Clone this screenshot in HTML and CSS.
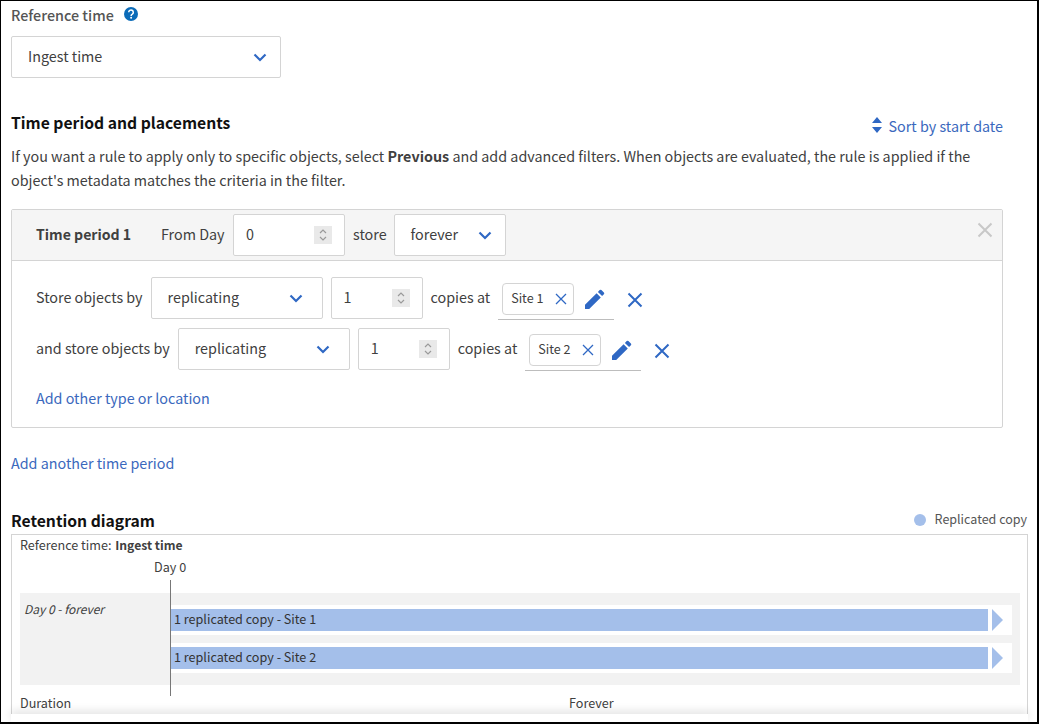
FILE: index.html
```html
<!DOCTYPE html>
<html lang="en">
<head>
<meta charset="utf-8">
<title>Time period and placements</title>
<link rel="stylesheet" href="styles.css">
</head>
<body>
<main class="frame">
  <div class="label-row">
    <span class="field-label">Reference time</span>
    <svg class="help" viewBox="0 0 14 14" width="14" height="14"><circle cx="7" cy="7" r="7" fill="#0b6bb8"/><path d="M4.700 5.300a2.300 2.300 0 1 1 3.600 1.900c-.8.5-1.200.9-1.200 1.700" fill="none" stroke="#fff" stroke-width="1.500"/><circle cx="7.100" cy="10.800" r="1" fill="#fff"/></svg>
  </div>
  <div class="select select-ref"><span>Ingest time</span><svg class="chev" viewBox="0 0 14 9" width="14" height="9"><path d="M1.500 1.500 7 7l5.500-5.500" fill="none" stroke="#2f68c4" stroke-width="2.200"/></svg></div>

  <div class="section-head">
    <h2 class="title">Time period and placements</h2>
    <a class="link sort"><svg class="sort-icon" viewBox="0 0 10 16" width="10" height="16"><path d="M5 0l5 6H0zM5 16l5-6H0z" fill="#2f68c4"/></svg>Sort by start date</a>
  </div>
  <p class="intro">If you want a rule to apply only to specific objects, select <b>Previous</b> and add advanced filters. When objects are evaluated, the rule is applied if the object's metadata matches the criteria in the filter.</p>

  <section class="period">
    <header class="period-head">
      <strong class="period-name">Time period 1</strong>
      <span class="from">From Day</span>
      <div class="num num-day"><span>0</span><i class="spin"><svg viewBox="0 0 8 14" width="8" height="14"><path d="M1 5l3-3 3 3M1 9l3 3 3-3" fill="none" stroke="#9a9a9a" stroke-width="1.200"/></svg></i></div>
      <span class="head-word">store</span>
      <div class="select select-store"><span>forever</span><svg class="chev" viewBox="0 0 14 9" width="14" height="9"><path d="M1.500 1.500 7 7l5.500-5.500" fill="none" stroke="#2f68c4" stroke-width="2.200"/></svg></div>
      <svg class="close-period" viewBox="0 0 16 16" width="16" height="16"><path d="M1.500 1.500l13 13M14.500 1.500l-13 13" stroke="#c8c8c8" stroke-width="2" fill="none"/></svg>
    </header>
    <div class="period-body">
      <div class="rule">
        <span class="rule-word">Store objects by</span>
        <div class="select select-type"><span>replicating</span><svg class="chev" viewBox="0 0 14 9" width="14" height="9"><path d="M1.500 1.500 7 7l5.500-5.500" fill="none" stroke="#2f68c4" stroke-width="2.200"/></svg></div>
        <div class="num num-copies"><span>1</span><i class="spin"><svg viewBox="0 0 8 14" width="8" height="14"><path d="M1 5l3-3 3 3M1 9l3 3 3-3" fill="none" stroke="#9a9a9a" stroke-width="1.200"/></svg></i></div>
        <span class="rule-word">copies at</span>
        <div class="sites">
          <div class="chip"><span>Site 1</span><svg viewBox="0 0 12 12" width="12" height="12"><path d="M1 1l10 10M11 1 1 11" stroke="#2f68c4" stroke-width="1.300" fill="none"/></svg></div>
          <svg class="pencil" viewBox="0 0 20 20" width="20" height="20"><path d="M0 20v-4.200L11.600 4.200l4.200 4.200L4.200 20zM12.900 2.900 14.700 1.100a1.200 1.200 0 0 1 1.700 0l2.500 2.500a1.200 1.200 0 0 1 0 1.700l-1.800 1.800z" fill="#2f68c4"/></svg>
        </div>
        <svg class="remove" viewBox="0 0 16 16" width="16" height="16"><path d="M1.500 1.500l13 13M14.500 1.500l-13 13" stroke="#2f68c4" stroke-width="2" fill="none"/></svg>
      </div>
      <div class="rule">
        <span class="rule-word">and store objects by</span>
        <div class="select select-type"><span>replicating</span><svg class="chev" viewBox="0 0 14 9" width="14" height="9"><path d="M1.500 1.500 7 7l5.500-5.500" fill="none" stroke="#2f68c4" stroke-width="2.200"/></svg></div>
        <div class="num num-copies"><span>1</span><i class="spin"><svg viewBox="0 0 8 14" width="8" height="14"><path d="M1 5l3-3 3 3M1 9l3 3 3-3" fill="none" stroke="#9a9a9a" stroke-width="1.200"/></svg></i></div>
        <span class="rule-word">copies at</span>
        <div class="sites">
          <div class="chip"><span>Site 2</span><svg viewBox="0 0 12 12" width="12" height="12"><path d="M1 1l10 10M11 1 1 11" stroke="#2f68c4" stroke-width="1.300" fill="none"/></svg></div>
          <svg class="pencil" viewBox="0 0 20 20" width="20" height="20"><path d="M0 20v-4.200L11.600 4.200l4.200 4.200L4.200 20zM12.900 2.900 14.700 1.100a1.200 1.200 0 0 1 1.700 0l2.500 2.500a1.200 1.200 0 0 1 0 1.700l-1.800 1.800z" fill="#2f68c4"/></svg>
        </div>
        <svg class="remove" viewBox="0 0 16 16" width="16" height="16"><path d="M1.500 1.500l13 13M14.500 1.500l-13 13" stroke="#2f68c4" stroke-width="2" fill="none"/></svg>
      </div>
      <a class="link add-other">Add other type or location</a>
    </div>
  </section>
  <a class="link add-period">Add another time period</a>

  <div class="retention-head">
    <h2 class="title">Retention diagram</h2>
    <div class="legend"><i class="dot"></i><span>Replicated copy</span></div>
  </div>
  <section class="diagram">
    <div class="ref">Reference time: <b>Ingest time</b></div>
    <div class="day0">Day 0</div>
    <div class="band">
      <div class="band-label">Day 0 - forever</div>
      <div class="lanes">
        <div class="lane"><div class="bar">1 replicated copy - Site 1</div><i class="arrow"></i></div>
        <div class="lane"><div class="bar">1 replicated copy - Site 2</div><i class="arrow"></i></div>
      </div>
    </div>
    <div class="duration"><span class="dur-label">Duration</span><span>Forever</span></div>
    <i class="axis"></i>
  </section>
  <div class="fade"></div>
</main>
</body>
</html>
```
FILE: styles.css
```css
* { box-sizing: border-box; }
html, body { margin: 0; padding: 0; }
body { width: 1039px; height: 724px; overflow: hidden; background: #fff; }
.frame {
  position: relative;
  width: 1039px;
  height: 724px;
  overflow: hidden;
  border: solid #000;
  border-width: 1px 2px 2px 1px;
  padding: 0 0 0 10px;
  font: 14.33px/24px "Noto Sans CJK SC", "Source Sans Pro", "Noto Sans", sans-serif;
  color: #404040;
}
b, strong { font-weight: 700; }
.label-row { display: flex; align-items: center; gap: 10px; height: 27px; padding-top: 1px; }
.field-label { font-weight: 500; color: #555; }
.help { margin-bottom: 2px; }
.select, .num {
  display: flex;
  align-items: center;
  justify-content: space-between;
  height: 42px;
  border: 1px solid #d4d4d4;
  border-radius: 2px;
  background: #fff;
  flex: none;
}
.select > span, .num > span, .head-word, .from, .period-name, .rule-word, .chip > span { margin-bottom: 2px; }
.select { padding: 0 13px 0 16px; }
.select-ref { width: 270px; margin-top: 8px; }
.select-store { width: 112px; margin-left: -1px; }
.select-type { width: 172px; padding-right: 19px; }
.num { padding: 0 12px; }
.num-day { width: 112px; }
.num-copies { width: 92px; }
.spin { display: flex; align-items: center; justify-content: center; width: 18px; height: 18px; background: #e9e9e9; }
.section-head { display: flex; justify-content: space-between; align-items: flex-start; width: 992px; margin-top: 33px; height: 25px; }
.title { margin: 0; font-size: 15.7px; line-height: 24px; font-weight: 700; color: #111; }
.link { color: #3a68bd; }
.sort { display: flex; align-items: center; gap: 7px; margin-top: 3px; }
.sort-icon { margin-bottom: 2px; }
.intro { margin: 8px 0 0; width: 985px; }
.period { width: 992px; height: 219px; margin-top: 17px; border: 1px solid #d4d4d4; border-radius: 2px; }
.period-head { display: flex; align-items: center; gap: 8px; height: 51px; padding: 0 9px 0 24px; background: #f5f5f5; border-bottom: 1px solid #d4d4d4; }
.period-name { width: 117px; font-size: 14.1px; font-weight: 700; white-space: nowrap; }
.from { width: 64px; white-space: nowrap; }
.close-period { margin-left: auto; margin-top: -10px; }
.period-body { padding: 16px 24px 0; }
.rule { display: flex; align-items: center; gap: 8px; height: 42px; margin-bottom: 9px; white-space: nowrap; }
.sites { display: flex; align-items: center; gap: 11px; width: 116px; height: 43px; padding: 2px 0 0 4px; border-bottom: 1px solid #bdbdbd; align-self: flex-start; }
.chip { display: flex; align-items: center; justify-content: space-between; width: 72px; height: 32px; padding: 0 6px 0 8px; border: 1px solid #d4d4d4; border-radius: 4px; font-size: 12.6px; }
.remove { margin: 3px 0 0 5px; }
.add-other { display: block; margin-top: 16px; }
.add-period { display: block; margin-top: 23px; }
.retention-head { display: flex; justify-content: space-between; align-items: flex-start; width: 1016px; margin-top: 34px; height: 26px; }
.legend { display: flex; align-items: center; gap: 9px; font-size: 12.5px; margin-top: -2px; color: #555; }
.dot { width: 12px; height: 12px; border-radius: 50%; background: #a4bfea; margin-top: 1px; }
.diagram { position: relative; width: 1017px; height: 190px; margin-top: -1px; border: 1px solid #d4d4d4; padding: 0 8px; font-size: 12.6px; line-height: 20px; }
.ref { height: 20px; }
.ref b { font-size: 12.2px; margin-left: 1px; }
.day0 { margin: 2px 0 0 134px; height: 20px; }
.band { display: flex; width: 1000px; height: 92px; margin-top: 16px; padding: 12px 8px 0 4px; background: #f2f2f2; }
.band-label { width: 147px; font-style: italic; margin-top: -6px; font-size: 12px; }
.lanes { display: flex; flex-direction: column; gap: 8px; }
.lane { display: flex; align-items: center; width: 841px; height: 30px; background: #fff; }
.bar { width: 817px; height: 22px; padding-left: 3px; background: #a4bfea; line-height: 20px; color: #333; }
.arrow { width: 0; height: 0; margin-left: 4px; border-left: 11px solid #a4bfea; border-top: 11px solid transparent; border-bottom: 11px solid transparent; }
.duration { display: flex; margin-top: 8px; }
.dur-label { width: 549px; }
.axis { position: absolute; left: 158px; top: 45px; width: 1px; height: 116px; background: #777; }
.fade { position: absolute; left: 10px; right: 9px; bottom: 0; height: 8px; background: #fff; box-shadow: 0 -3px 8px rgba(0, 0, 0, .12); }
```
